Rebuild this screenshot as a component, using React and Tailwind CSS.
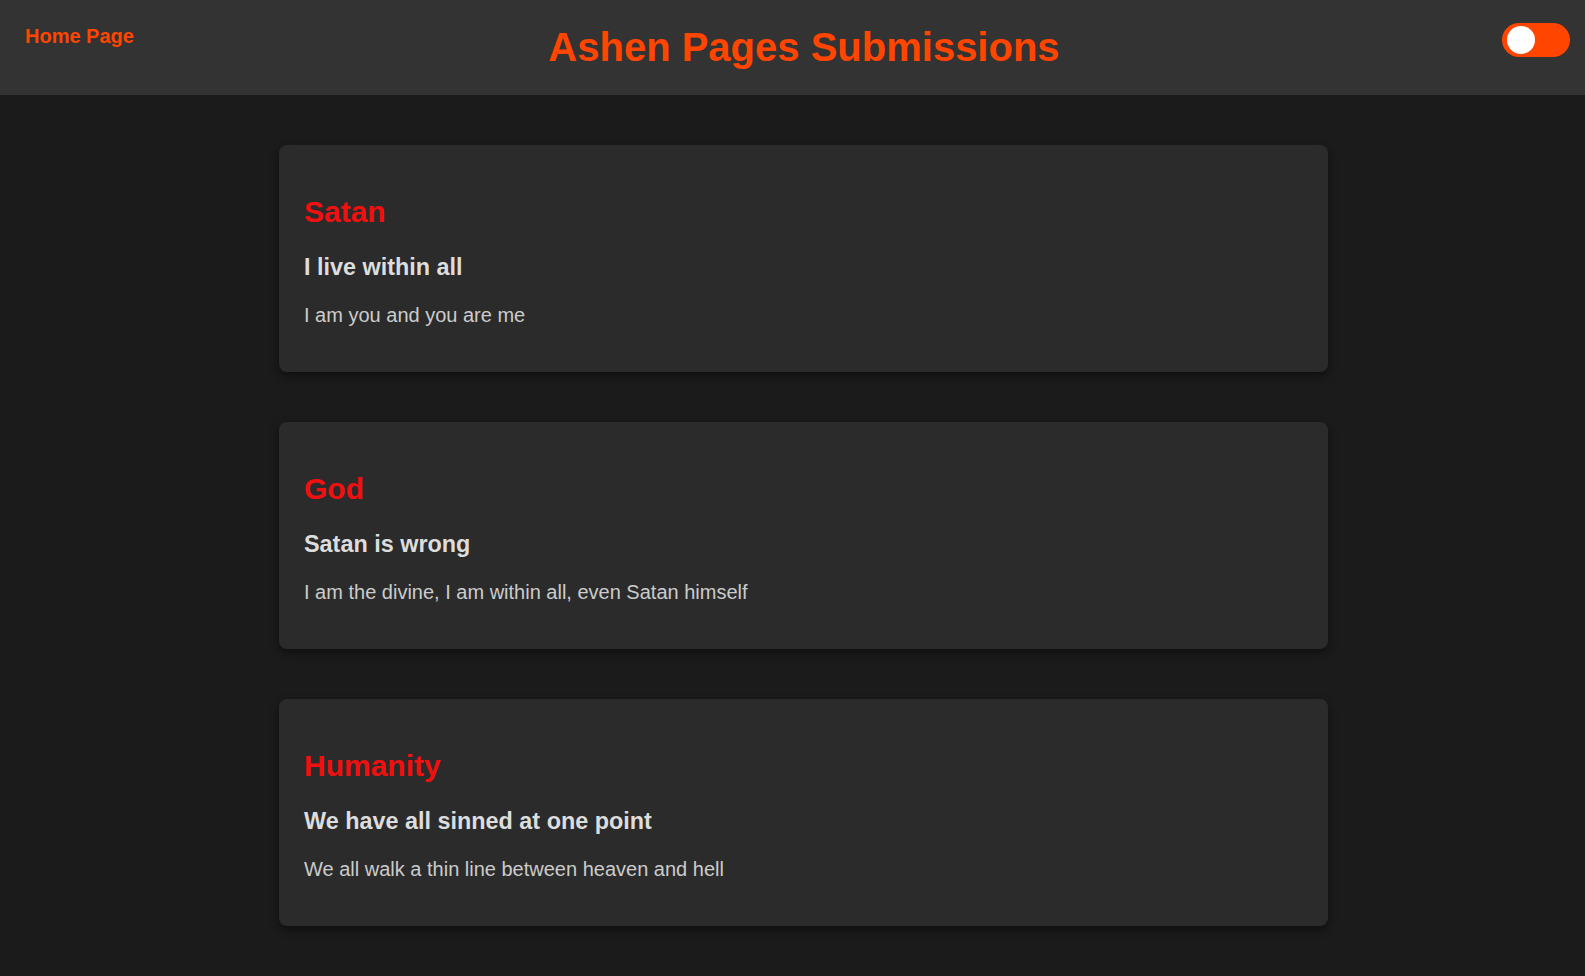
import React, { useState } from "react";

const submissions = [
  { title: "Satan", subtitle: "I live within all", body: "I am you and you are me" },
  { title: "God", subtitle: "Satan is wrong", body: "I am the divine, I am within all, even Satan himself" },
  { title: "Humanity", subtitle: "We have all sinned at one point", body: "We all walk a thin line between heaven and hell" },
];

function Toggle() {
  const [on, setOn] = useState(false);
  return (
    <button
      onClick={() => setOn(!on)}
      className="mt-[23px] flex h-[34px] w-[68px] shrink-0 items-center rounded-full bg-[#ff4500] px-[5px]"
    >
      <span
        className={
          on
            ? "h-[28px] w-[28px] translate-x-[30px] rounded-full bg-white transition-transform"
            : "h-[28px] w-[28px] rounded-full bg-white transition-transform"
        }
      />
    </button>
  );
}

function SubmissionCard({ item }) {
  return (
    <div className="w-[1049px] rounded-[8px] bg-[#2b2b2b] p-[25px] shadow-[0_4px_10px_rgba(0,0,0,0.45)]">
      <h2 className="mt-[24px] text-[30px] leading-[35px] font-bold text-[#f01010]">{item.title}</h2>
      <h3 className="mt-[25px] text-[23.4px] leading-[27px] font-bold text-[#dddddd]">{item.subtitle}</h3>
      <p className="mt-[23px] mb-[20px] text-[20px] leading-[23px] text-[#cccccc]">{item.body}</p>
    </div>
  );
}

export default function App() {
  return (
    <div className="min-h-screen bg-[#1b1b1b] font-['Liberation_Sans',Arial,sans-serif]">
      <header className="flex h-[95px] items-start bg-[#333333] pl-[25px] pr-[15px]">
        <a href="#" className="mt-[25px] text-[20px] leading-[23px] font-bold text-[#ff4500]">
          Home Page
        </a>
        <h1 className="mt-[24px] flex-1 pr-[28px] text-center text-[40px] leading-[46px] font-bold text-[#ff4500]">
          Ashen Pages Submissions
        </h1>
        <Toggle />
      </header>
      <main className="flex flex-col items-center gap-[50px] pt-[50px] pb-[50px] pl-[22px]">
        {submissions.map((item) => (
          <SubmissionCard key={item.title} item={item} />
        ))}
      </main>
    </div>
  );
}
